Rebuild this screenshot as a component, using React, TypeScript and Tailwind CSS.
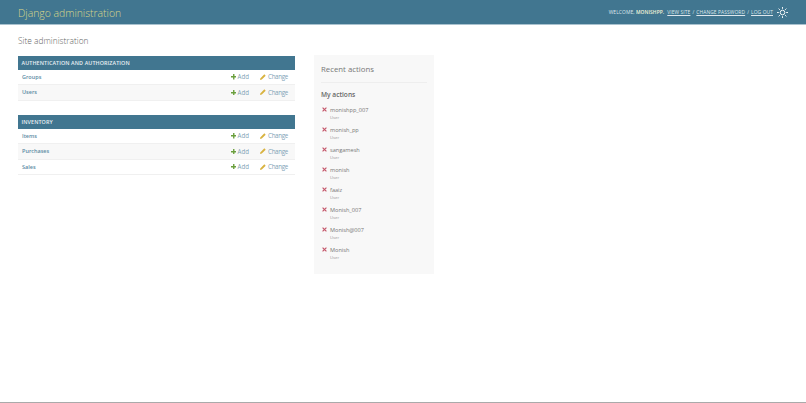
import React from 'react';

const font = { fontFamily: '"Open Sans", sans-serif' };

const PlusIcon = () => (
  <svg width="5.5" height="5.5" viewBox="0 0 8 8" className="shrink-0">
    <path d="M3 0h2v3h3v2H5v3H3V5H0V3h3z" fill="#6a9f3c" />
  </svg>
);

const PencilIcon = () => (
  <svg width="6" height="6" viewBox="0 0 8 8" className="shrink-0">
    <path d="M0 8l.6-2.4L5.8.4l1.8 1.8-5.2 5.2z" fill="#d8b23f" />
  </svg>
);

const CrossIcon = () => (
  <svg width="5" height="5" viewBox="0 0 6 6" className="shrink-0">
    <path d="M.7.7l4.6 4.6M5.3.7L.7 5.3" stroke="#c4566a" strokeWidth="1.4" />
  </svg>
);

const SunIcon = () => (
  <svg width="11" height="11" viewBox="0 0 24 24" fill="none" stroke="#fff" strokeWidth="2">
    <circle cx="12" cy="12" r="5" />
    <path d="M12 0v4M12 20v4M0 12h4M20 12h4M3.5 3.5l2.8 2.8M17.7 17.7l2.8 2.8M3.5 20.5l2.8-2.8M17.7 6.3l2.8-2.8" />
  </svg>
);

const Row: React.FC<{ name: string; alt?: boolean }> = ({ name, alt }) => (
  <div className={`flex items-center h-[15.25px] border-b border-[#f0f0f0] pl-[4px] pr-[7px] ${alt ? 'bg-[#f8f8f8]' : 'bg-white'}`}>
    <span className="flex-1 text-[5.5px] font-semibold text-[#5a8aa3]">{name}</span>
    <span className="flex items-center gap-[1.5px] text-[6.2px] text-[#7fa3b6]">
      <PlusIcon />
      Add
    </span>
    <span className="flex items-center gap-[2px] text-[6.2px] tracking-[-0.3px] text-[#7fa3b6] ml-[11px]">
      <PencilIcon />
      Change
    </span>
  </div>
);

const Module: React.FC<{ title: string; rows: string[] }> = ({ title, rows }) => (
  <div className="mb-[14.5px]">
    <div className="h-[14px] flex items-center bg-[#417690] pl-[3.5px] text-[5.4px] font-semibold text-[#e8eff3] tracking-[0.1px]">
      {title}
    </div>
    {rows.map((r, i) => (
      <Row key={r} name={r} alt={i % 2 === 1} />
    ))}
  </div>
);

const actions = ['monishpp_007', 'monish_pp', 'sangamesh', 'monish', 'faaiz', 'Monish_007', 'Monish@007', 'Monish'];

export default function App() {
  return (
    <div className="h-[403px] w-[806px] flex flex-col bg-white border-b border-[#aaaaaa] overflow-hidden" style={font}>
      <header className="h-[24.5px] shrink-0 flex items-center justify-between bg-[#417690] border-b border-[#a9c2cf] pl-[18px] pr-[18px] pt-[2px]">
        <div className="pt-[2px] text-[10.4px] text-[#d8d68a] font-light">Django administration</div>
        <div className="flex items-center text-[4.9px] text-[#dfe8ed] tracking-[0.1px]">
          <span>WELCOME, <b className="font-semibold text-[#f5f5d8]">MONISHPP.</b></span>
          <span className="ml-[3px] underline decoration-[0.3px]">VIEW SITE</span>
          <span className="mx-[2px]">/</span>
          <span className="underline decoration-[0.3px]">CHANGE PASSWORD</span>
          <span className="mx-[2px]">/</span>
          <span className="underline decoration-[0.3px]">LOG OUT</span>
          <span className="ml-[4px]"><SunIcon /></span>
        </div>
      </header>
      <main className="px-[18px] pt-[10.5px]">
        <h1 className="text-[8.4px] font-light text-[#666666] leading-[12px] mb-[9px]">Site administration</h1>
        <div className="flex items-start">
          <div className="w-[277px]">
            <Module title="AUTHENTICATION AND AUTHORIZATION" rows={['Groups', 'Users']} />
            <Module title="INVENTORY" rows={['Items', 'Purchases', 'Sales']} />
          </div>
          <aside className="w-[120px] h-[219px] -mt-[1px] ml-[19px] bg-[#f8f8f8]">
            <div className="h-[27.5px] mx-[7px] pt-[3px] flex items-center border-b border-[#eeeeee] text-[7.8px] text-[#777777]">
              Recent actions
            </div>
            <div className="px-[7px] pt-[7px]">
              <div className="text-[6.6px] font-semibold text-[#666666] leading-[9px] mb-[7px]">My actions</div>
              <div className="flex flex-col gap-[5px]">
                {actions.map((a) => (
                  <div key={a} className="h-[15px]">
                    <div className="flex items-center gap-[3px] ml-[1px] text-[5.6px] leading-[8px] text-[#777777]">
                      <CrossIcon />
                      {a}
                    </div>
                    <div className="ml-[9px] text-[4.2px] leading-[7.5px] text-[#999999]">User</div>
                  </div>
                ))}
              </div>
            </div>
          </aside>
        </div>
      </main>
    </div>
  );
}
